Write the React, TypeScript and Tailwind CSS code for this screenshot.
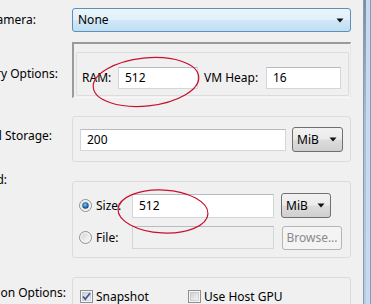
import React from "react";

const font = { fontFamily: '"Noto Sans", "Liberation Sans", sans-serif' };

function Arrow() {
  return (
    <svg width="8" height="5" viewBox="0 0 8 5" className="shrink-0">
      <path d="M0.5 0.5 L7.5 0.5 L4 4.5 Z" fill="#111" />
    </svg>
  );
}

function Radio({ checked }: { checked: boolean }) {
  return (
    <svg width="13" height="13" viewBox="0 0 13 13" className="shrink-0">
      <defs>
        <linearGradient id={checked ? "rg1" : "rg0"} x1="0" y1="0" x2="1" y2="1">
          <stop offset="0" stopColor="#d4d4d4" />
          <stop offset="1" stopColor="#fbfbfb" />
        </linearGradient>
        <radialGradient id="dot" cx="0.45" cy="0.4" r="0.6">
          <stop offset="0" stopColor="#8fd3f7" />
          <stop offset="0.5" stopColor="#2a80c4" />
          <stop offset="1" stopColor="#0f3f73" />
        </radialGradient>
      </defs>
      <circle cx="6.5" cy="6.5" r="6" fill="#f4f4f4" stroke="#8e8f8f" strokeWidth="1" />
      <circle cx="6.5" cy="6.5" r="4.3" fill={checked ? "url(#rg1)" : "url(#rg0)"} />
      {checked && <circle cx="6.5" cy="6.5" r="3.2" fill="url(#dot)" />}
    </svg>
  );
}

function Check({ checked }: { checked: boolean }) {
  return (
    <svg width="13" height="13" viewBox="0 0 13 13" className="shrink-0">
      <defs>
        <linearGradient id="cg" x1="0" y1="0" x2="1" y2="1">
          <stop offset="0" stopColor="#cbcfd5" />
          <stop offset="1" stopColor="#f6f6f6" />
        </linearGradient>
      </defs>
      <rect x="0.5" y="0.5" width="12" height="12" fill="#f4f4f4" stroke="#8e8f8f" />
      <rect x="2.5" y="2.5" width="8" height="8" fill="url(#cg)" stroke="#b9bdc3" strokeWidth="0.6" />
      {checked && (
        <path d="M3 6.5 L5.3 9.2 L10 3.3" fill="none" stroke="#3b5a9a" strokeWidth="1.8" />
      )}
    </svg>
  );
}

function Input({ value, w, h = 22, disabled = false }: { value?: string; w: number; h?: number; disabled?: boolean }) {
  return (
    <div
      className={`shrink-0 flex items-center pl-[6px] text-[12px] text-black border border-[#d3d6db] border-t-[#b7bbc1] ${disabled ? "bg-[#f0f0f0] border-[#c6c6c6]" : "bg-white"}`}
      style={{ width: w, height: h }}
    >
      {value}
    </div>
  );
}

function MiB({ w, h }: { w: number; h: number }) {
  return (
    <div
      className="shrink-0 flex items-center justify-between pl-[4px] pr-[5px] text-[12px] text-black rounded-[3px] border border-[#707070] bg-[linear-gradient(#f2f2f2_0%,#ebebeb_48%,#dddddd_52%,#cfcfcf_100%)]"
      style={{ width: w, height: h }}
    >
      <span>MiB</span>
      <Arrow />
    </div>
  );
}

function Label({ text, pr, mt }: { text: string; pr: number; mt: number }) {
  return (
    <div className="w-[72px] flex justify-end shrink-0" style={{ paddingRight: pr }}>
      <span className="whitespace-nowrap text-[12px] leading-[16px] text-black" style={{ marginTop: mt }}>
        {text}
      </span>
    </div>
  );
}

export default function App() {
  return (
    <div className="relative w-[371px] h-[304px] overflow-hidden bg-[#f0f0f0] flex" style={font}>
      <div className="w-[363px] shrink-0 flex flex-col pt-[8px]">
        {/* Camera */}
        <div className="flex h-[24px] items-center">
          <div className="w-[72px] flex justify-end shrink-0 pr-[36px]">
            <span className="whitespace-nowrap text-[12px] leading-[16px] text-black">Camera:</span>
          </div>
          <div className="w-[279px] shrink-0 h-[24px] flex items-center justify-between pl-[5px] pr-[6px] text-[12px] text-black rounded-[3px] border border-[#5f8fb8] bg-[linear-gradient(#eaf5fc_0%,#e1f0fa_48%,#cfe7f6_52%,#bfdff2_100%)]">
            <span>None</span>
            <Arrow />
          </div>
        </div>

        {/* Memory options */}
        <div className="flex mt-[10px]">
          <Label text="Memory Options:" pr={14} mt={24} />
          <div className="w-[279px] shrink-0 h-[56px] border-t-2 border-l-2 border-t-[#9a9a9a] border-l-[#9a9a9a] border-r border-b border-r-[#e6e6e6] border-b-[#f8f8f8] pt-[8px] pl-[2px] pr-[1px]">
            <div className="h-[44px] border border-[#dcdcdc] rounded-[2px] flex items-center pl-[5px] pt-[8px]">
              <span className="w-[36px] shrink-0 text-[12px] text-black">RAM:</span>
              <Input value="512" w={80} />
              <span className="w-[68px] shrink-0 pl-[6px] text-[12px] text-black whitespace-nowrap">VM Heap:</span>
              <Input value="16" w={75} />
            </div>
          </div>
        </div>

        {/* Internal storage */}
        <div className="flex mt-[18px]">
          <Label text="Internal Storage:" pr={20} mt={12} />
          <div className="w-[279px] shrink-0 h-[46px] border border-[#dcdcdc] rounded-[3px] flex items-center pl-[7px] pt-[1px] gap-[6px]">
            <Input value="200" w={206} />
            <MiB w={51} h={25} />
          </div>
        </div>

        {/* SD card */}
        <div className="flex mt-[19px]">
          <Label text="SD Card:" pr={65} mt={-9} />
          <div className="w-[279px] shrink-0 h-[77px] border border-[#dcdcdc] rounded-[3px] flex flex-col pt-[11px] pl-[6px] gap-[7px]">
            <div className="flex items-center h-[25px]">
              <div className="w-[53px] shrink-0 flex items-center gap-[4px] text-[12px] text-black">
                <Radio checked />
                <span>Size:</span>
              </div>
              <Input value="512" w={142} h={24} />
              <div className="w-[7px] shrink-0" />
              <MiB w={50} h={25} />
            </div>
            <div className="flex items-center h-[25px]">
              <div className="w-[53px] shrink-0 flex items-center gap-[4px] text-[12px] text-black">
                <Radio checked={false} />
                <span>File:</span>
              </div>
              <Input w={142} h={23} disabled />
              <div className="w-[8px] shrink-0" />
              <div className="w-[60px] shrink-0 h-[24px] flex items-center justify-center rounded-[3px] border border-[#b5b5b5] bg-[#f4f4f4] text-[12px] text-[#8a8a8a]">
                Browse...
              </div>
            </div>
          </div>
        </div>

        {/* Emulation options */}
        <div className="flex mt-[19px]">
          <Label text="Emulation Options:" pr={6} mt={8} />
          <div className="w-[279px] shrink-0 h-[40px] border border-[#dcdcdc] rounded-[3px] flex items-start pt-[12px] pl-[7px]">
            <div className="w-[108px] shrink-0 flex items-center gap-[3px] text-[12px] text-black leading-[13px]">
              <Check checked />
              <span>Snapshot</span>
            </div>
            <div className="flex items-center gap-[3px] text-[12px] text-black leading-[13px]">
              <Check checked={false} />
              <span>Use Host GPU</span>
            </div>
          </div>
        </div>
      </div>

      {/* window frame on right */}
      <div className="w-[8px] shrink-0 h-full flex">
        <div className="w-[1px] h-full bg-[#8a9bb0]" />
        <div className="w-[2px] h-full bg-[linear-gradient(#7c8da3_0%,#a9bdd6_40%,#b9cce3_100%)]" />
        <div className="w-[4px] h-full bg-[#c8daee]" />
        <div className="w-[1px] h-full bg-[#7f9dc4]" />
      </div>

      {/* red annotation ellipses */}
      <svg className="absolute left-0 top-0 pointer-events-none" width="371" height="304">
        <ellipse cx="146" cy="82" rx="53" ry="24" transform="rotate(-6 146 82)" fill="none" stroke="#c8102e" strokeWidth="1.2" />
        <ellipse cx="163" cy="211.5" rx="45" ry="21.5" transform="rotate(3 163 211.5)" fill="none" stroke="#c8102e" strokeWidth="1.2" />
      </svg>
    </div>
  );
}
